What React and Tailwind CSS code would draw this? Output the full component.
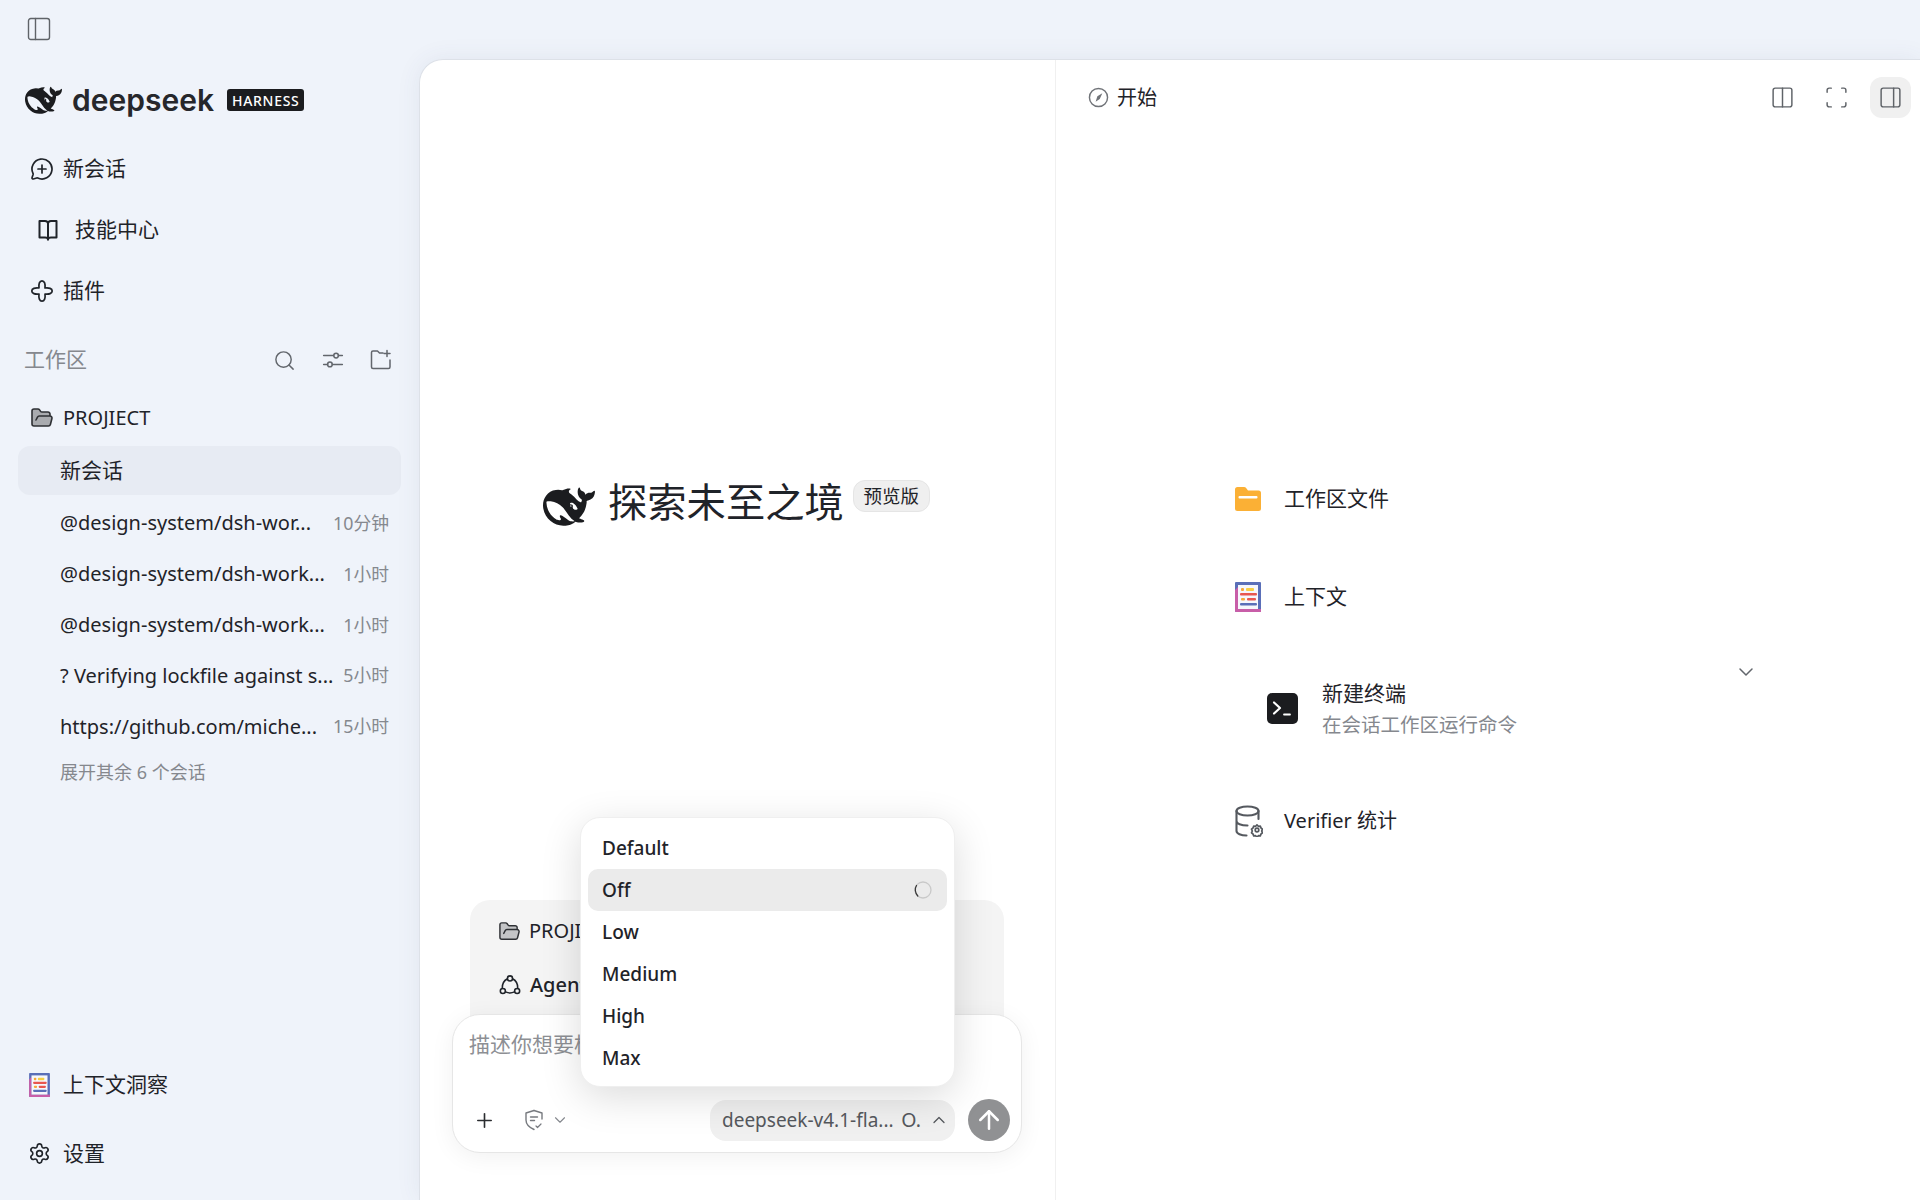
import React from 'react';
import {
  PanelLeft, PanelRight, MessageCirclePlus, Search, FolderOpen, Settings,
  Columns2, Scan, Plus, ChevronDown, ChevronUp, ArrowUp,
} from 'lucide-react';

const FONT = "font-['Noto_Sans','Noto_Sans_CJK_SC',sans-serif]";

const WHALE = "M23.748 4.482c-.254-.124-.364.113-.512.234-.051.039-.094.09-.137.136-.372.397-.806.657-1.373.626-.829-.046-1.537.214-2.163.848-.133-.782-.575-1.248-1.247-1.548-.352-.156-.708-.311-.955-.65-.172-.241-.219-.51-.305-.774-.055-.16-.11-.323-.293-.35-.2-.031-.278.136-.356.276-.313.572-.434 1.202-.422 1.84.027 1.436.633 2.58 1.838 3.393.137.093.172.187.129.323-.082.28-.18.552-.266.833-.055.179-.137.217-.329.14a5.526 5.526 0 01-1.736-1.18c-.857-.828-1.631-1.742-2.597-2.458a11.365 11.365 0 00-.689-.471c-.985-.957.13-1.743.388-1.836.27-.098.093-.432-.779-.428-.872.004-1.67.295-2.687.684a3.055 3.055 0 01-.465.137 9.597 9.597 0 00-2.883-.102c-1.885.21-3.39 1.102-4.497 2.623C.082 8.606-.231 10.684.152 12.85c.403 2.284 1.569 4.175 3.36 5.653 1.858 1.533 3.997 2.284 6.438 2.14 1.482-.085 3.133-.284 4.994-1.86.47.234.962.327 1.78.397.63.059 1.236-.03 1.705-.128.735-.156.684-.837.419-.961-2.155-1.004-1.682-.595-2.113-.926 1.096-1.296 2.746-2.642 3.392-7.003.05-.347.007-.565 0-.845-.004-.17.035-.237.23-.256a4.173 4.173 0 001.545-.475c1.396-.763 1.96-2.015 2.093-3.517.02-.23-.004-.467-.247-.588zM11.581 18c-2.089-1.642-3.102-2.183-3.52-2.16-.392.024-.321.471-.235.763.09.288.207.486.371.739.114.167.192.416-.113.603-.673.416-1.842-.14-1.897-.167-1.361-.802-2.5-1.86-3.301-3.307-.774-1.393-1.224-2.887-1.298-4.482-.02-.386.093-.522.477-.592a4.696 4.696 0 011.529-.039c2.132.312 3.946 1.265 5.468 2.774.868.86 1.525 1.887 2.202 2.891.72 1.066 1.494 2.082 2.48 2.914.348.292.625.514.891.677-.802.09-2.14.11-3.054-.614zm1-6.44a.306.306 0 01.415-.287.302.302 0 01.2.288.306.306 0 01-.31.307.303.303 0 01-.304-.308zm3.11 1.596c-.2.081-.399.151-.59.16a1.245 1.245 0 01-.798-.254c-.274-.23-.47-.358-.552-.758a1.73 1.73 0 01.016-.588c.07-.327-.008-.537-.239-.727-.187-.156-.426-.199-.688-.199a.559.559 0 01-.254-.078c-.11-.054-.2-.19-.114-.358.028-.054.16-.186.192-.21.356-.202.767-.136 1.146.016.352.144.618.408 1.001.782.391.451.462.576.685.914.176.265.336.537.445.848.067.195-.019.354-.25.452z";

const Whale = ({ className }) => (
  <svg viewBox="0 0 24 24" className={className} fill="currentColor" fillRule="evenodd"><path d={WHALE} /></svg>
);

const BookIcon = ({ className }) => (
  <svg viewBox="0 0 20 22" className={className} fill="none" stroke="currentColor" strokeWidth="2" strokeLinejoin="round" strokeLinecap="round">
    <path d="M1.500 2h5.500c1.700 0 3 1 3 2.500V20.500c0-1-1.300-2-3-2H1.500Z" />
    <path d="M18.500 2H13c-1.700 0-3 1-3 2.500V20.500c0-1 1.300-2 3-2h5.500Z" />
  </svg>
);

const PluginIcon = ({ className }) => (
  <svg viewBox="0 0 24 24" className={className} fill="none" stroke="currentColor" strokeWidth="1.700" strokeLinejoin="round">
    <path d="M12 1.800C14.500 1.800 15.500 5 15 9C19 8.500 22.200 9.500 22.200 12C22.200 14.500 19 15.500 15 15C15.500 19 14.500 22.200 12 22.200C9.500 22.200 8.500 19 9 15C5 15.500 1.800 14.500 1.800 12C1.800 9.500 5 8.500 9 9C8.500 5 9.500 1.800 12 1.800Z" />
  </svg>
);

const CompassFilled = ({ className }) => (
  <svg viewBox="0 0 22 22" className={className} fill="none">
    <circle cx="11" cy="11" r="9.500" stroke="#707378" strokeWidth="1.500" />
    <path d="M15 6.500 12.300 12.600 8 15.500 9.800 9.600Z" fill="#707378" />
  </svg>
);

const SlidersIcon = ({ className }) => (
  <svg viewBox="0 0 20 20" className={className} fill="none" stroke="currentColor" strokeWidth="1.400" strokeLinecap="round">
    <path d="M1.500 6h9M15 6h3.500M1.500 14h3.500M9.500 14h9" />
    <circle cx="12.800" cy="6" r="2.100" />
    <circle cx="7.200" cy="14" r="2.100" />
  </svg>
);

const FolderPlusIcon = ({ className }) => (
  <svg viewBox="0 0 22 22" className={className} fill="none" stroke="currentColor" strokeWidth="1.500" strokeLinecap="round" strokeLinejoin="round">
    <path d="M13 4H9.500L7.500 2H3a1.500 1.500 0 0 0-1.500 1.500V18A1.500 1.500 0 0 0 3 19.500h15.500A1.500 1.500 0 0 0 20 18v-7" />
    <path d="M17 1.500v6M14 4.500h6" />
  </svg>
);

const ContextIcon = ({ className }) => (
  <svg viewBox="0 0 26 30" className={className}>
    <rect x="0" y="0" width="26" height="30" rx="1" fill="#5a6fb8" />
    <path d="M0 8 3 5v22h23v3H1a1 1 0 0 1-1-1Z" fill="#c85ea8" />
    <rect x="3" y="3" width="20" height="24" fill="#f6f7fb" />
    <rect x="6" y="6" width="3" height="3" rx="1" fill="#f5a93b" />
    <rect x="11" y="6" width="8" height="3" rx="1" fill="#f7cf45" />
    <rect x="5" y="11" width="17" height="2.600" rx="1" fill="#e8574f" />
    <rect x="6" y="16" width="4" height="2.600" rx="1" fill="#f5a93b" />
    <rect x="12" y="16" width="9" height="2.600" rx="1" fill="#e8574f" />
    <rect x="5" y="21" width="17" height="2.600" rx="1" fill="#5a6fb8" />
  </svg>
);

const OrangeFolder = ({ className }) => (
  <svg viewBox="0 0 26 24" className={className}>
    <path d="M2.500 0h6.500c1 0 1.700.4 2.300 1.200L13 3.500h10.500A2.500 2.500 0 0 1 26 6v15.500a2.500 2.500 0 0 1-2.500 2.500h-21A2.500 2.500 0 0 1 0 21.500v-19A2.500 2.500 0 0 1 2.500 0Z" fill="#fbb035" />
    <rect x="3.500" y="9" width="19" height="2.600" rx="1" fill="#ffffff" />
  </svg>
);

const DatabaseGear = ({ className }) => (
  <svg viewBox="0 0 28 32" className={className} fill="none" stroke="#55595f" strokeWidth="2.100" strokeLinecap="round" strokeLinejoin="round">
    <ellipse cx="12.500" cy="6" rx="11" ry="4.500" />
    <path d="M1.500 6v20c0 2.500 4.500 4.500 10 4.500M23.500 6v8M1.500 16c0 2.500 4.500 4.500 11 4.500" />
    <circle cx="22" cy="25" r="1.800" strokeWidth="1.700" />
    <path strokeWidth="1.700" d="M22 19.800l1.300 1.500 2-.2.7 1.900 1.500 1.200-.8 1.800.8 1.800-1.500 1.200-.7 1.900-2-.2-1.300 1.500-1.300-1.500-2 .2-.7-1.900-1.500-1.200.8-1.800-.8-1.800 1.500-1.200.7-1.900 2 .2Z" />
  </svg>
);

const TerminalTile = () => (
  <div className="w-[31px] h-[31px] rounded-[5px] bg-[#1b1c1f] flex items-center justify-center shrink-0">
    <svg viewBox="0 0 31 31" className="w-[31px] h-[31px]" fill="none" stroke="#ffffff" strokeWidth="2.200" strokeLinecap="round" strokeLinejoin="round">
      <path d="M7 9.500 13 15l-6 5.500" />
      <path d="M17 21.500h6" strokeWidth="1.800" />
    </svg>
  </div>
);

const ShieldIcon = ({ className }) => (
  <svg viewBox="0 0 20 22" className={className} fill="none" stroke="currentColor" strokeWidth="1.400" strokeLinecap="round" strokeLinejoin="round">
    <path d="M10 1.500 2 4v7c0 4.500 3.500 7.500 8 9.500" />
    <path d="M10 1.500 18 4v6" />
    <path d="M6.500 8h7M6.500 11.500h4" />
    <path d="M12 17l1.500 1.500L17 15" strokeWidth="1.200" />
  </svg>
);

const AgentIcon = ({ className }) => (
  <svg viewBox="0 0 20 20" className={className} fill="none" stroke="currentColor" strokeWidth="1.400" strokeLinecap="round">
    <circle cx="10" cy="4" r="2.300" />
    <circle cx="3.500" cy="15.500" r="2.300" />
    <circle cx="16.500" cy="15.500" r="2.300" />
    <path d="M7.300 4.500C4.500 6 3 8.500 3 12.500M12.700 4.500C15.500 6 17 8.500 17 12.500M6 16.300c2.500 1.200 5.500 1.200 8 0" />
  </svg>
);

const BusyIcon = () => (
  <svg viewBox="0 0 20 20" className="w-[20px] h-[20px]" fill="none" strokeWidth="1.300" strokeLinecap="round">
    <circle cx="10" cy="10" r="8" stroke="#c9c9c9" />
    <path d="M3.500 5.500C1.500 8.500 2 13 4.800 16" stroke="#3a3a3a" />
  </svg>
);

const RECENT = [
  { title: '@design-system/dsh-wor...', age: '10分钟' },
  { title: '@design-system/dsh-work...', age: '1小时' },
  { title: '@design-system/dsh-work...', age: '1小时' },
  { title: '? Verifying lockfile against s...', age: '5小时' },
  { title: 'https://github.com/miche...', age: '15小时' },
];

const LEVELS = ['Default', 'Off', 'Low', 'Medium', 'High', 'Max'];

const NavRow = ({ icon, gap, pad, children }) => (
  <div className={`h-[61px] flex items-center text-[21px] text-[#1f2329] ${pad} ${gap}`}>
    {icon}
    <span>{children}</span>
  </div>
);

const Sidebar = () => (
  <aside className="w-[419px] shrink-0 flex flex-col">
    <div className="h-[58px] flex items-center pl-[25px]">
      <PanelLeft className="w-[28px] h-[28px] text-[#5f6368]" strokeWidth={1.200} />
    </div>
    <div className="h-[60px] mt-[12px] flex items-center pl-[25px]">
      <Whale className="w-[37px] h-[37px] text-[#1b1c1f]" />
      <span className="ml-[10px] text-[30px] leading-none font-semibold text-[#26272b] font-['Inter',sans-serif] w-[145px] whitespace-nowrap">deepseek</span>
      <span className="ml-[10px] h-[22px] px-[5px] flex items-center rounded-[3px] bg-[#1b1c1f] text-white text-[14px] font-medium tracking-[0.7px]">HARNESS</span>
    </div>
    <div className="mt-[8px]">
      <NavRow pad="pl-[30px]" gap="gap-[9px]" icon={<MessageCirclePlus className="w-[24px] h-[24px]" strokeWidth={1.700} />}>新会话</NavRow>
      <NavRow pad="pl-[38px]" gap="gap-[17px]" icon={<BookIcon className="w-[20px] h-[22px]" />}>技能中心</NavRow>
      <NavRow pad="pl-[30px]" gap="gap-[9px]" icon={<PluginIcon className="w-[24px] h-[24px]" />}>插件</NavRow>
    </div>
    <div className="h-[40px] mt-[19px] flex items-center pl-[24px] pr-[27px]">
      <span className="text-[21px] text-[#85888e]">工作区</span>
      <div className="ml-auto flex items-center gap-[26px] text-[#62666c]">
        <Search className="w-[23px] h-[23px]" strokeWidth={1.500} />
        <SlidersIcon className="w-[22px] h-[22px]" />
        <FolderPlusIcon className="w-[22px] h-[22px]" />
      </div>
    </div>
    <div className="h-[40px] mt-[18px] flex items-center pl-[30px] gap-[9px] text-[20px] text-[#1f2329]">
      <FolderOpen className="w-[24px] h-[24px] text-[#2e3034] fill-[#a9abaf]" strokeWidth={1.600} />
      <span>PROJIECT</span>
    </div>
    <div className="mx-[18px] mt-[8px] h-[49px] rounded-[12px] bg-[#e7ebf3] flex items-center pl-[42px] text-[21px] text-[#1f2329]">新会话</div>
    <div className="mt-[3px]">
      {RECENT.map((row, i) => (
        <div key={i} className="h-[50.800px] pl-[60px] pr-[30px] flex items-center justify-between">
          <span className="text-[20px] text-[#1f2329] whitespace-nowrap">{row.title}</span>
          <span className="text-[17.800px] text-[#85888e] whitespace-nowrap">{row.age}</span>
        </div>
      ))}
    </div>
    <div className="h-[42px] pl-[60px] flex items-center text-[18px] text-[#85888e]">展开其余 6 个会话</div>
    <div className="mt-auto pb-[12px]">
      <div className="h-[69px] flex items-center pl-[29px] gap-[13px] text-[21px] text-[#1f2329]">
        <ContextIcon className="w-[21px] h-[24px]" />
        <span>上下文洞察</span>
      </div>
      <div className="h-[69px] flex items-center pl-[28px] gap-[12px] text-[21px] text-[#1f2329]">
        <Settings className="w-[23px] h-[23px]" strokeWidth={1.700} />
        <span>设置</span>
      </div>
    </div>
  </aside>
);

const Composer = () => (
  <div className="mt-auto relative pl-[32px] pr-[33px] pb-[47px]">
    <div className="mx-[18px] h-[140px] -mb-[26px] rounded-t-[20px] bg-[#f4f4f4] pl-[28px] pt-[12px] text-[20px] text-[#1f2329]">
      <div className="h-[38px] flex items-center gap-[8px]">
        <FolderOpen className="w-[23px] h-[23px] text-[#2e3034] fill-[#c3c4c6]" strokeWidth={1.500} />
        <span>PROJIECT</span>
      </div>
      <div className="h-[38px] mt-[16px] flex items-center gap-[9px] font-medium">
        <AgentIcon className="w-[22px] h-[22px] ml-[1px]" />
        <span>Agent</span>
      </div>
    </div>
    <div className="relative h-[139px] rounded-[28px] bg-white border border-[#e6e6e6] shadow-[0_4px_24px_rgba(0,0,0,0.06)] flex flex-col">
      <div className="pl-[16px] pt-[14px] text-[21px] text-[#8d8f94]">描述你想要构建的内容</div>
      <div className="mt-auto h-[42px] mb-[11px] flex items-center pl-[20px] pr-[11px]">
        <Plus className="w-[23px] h-[23px] text-[#2b2d30]" strokeWidth={1.700} />
        <ShieldIcon className="w-[20px] h-[22px] ml-[28px] text-[#777a7f]" />
        <ChevronDown className="w-[18px] h-[18px] ml-[7px] text-[#85888e]" strokeWidth={1.500} />
        <div className="ml-auto w-[245px] h-[41px] rounded-[16px] bg-[#f0f0f0] flex items-center pl-[12px] text-[19px] text-[#55585d]">
          <span className="whitespace-nowrap">deepseek-v4.1-fla...</span>
          <span className="ml-auto text-[19.500px]">O.</span>
          <ChevronUp className="w-[20px] h-[20px] ml-[8px] mr-[6px]" strokeWidth={1.500} />
        </div>
        <div className="ml-[13px] w-[42px] h-[42px] rounded-full bg-[#909193] flex items-center justify-center">
          <ArrowUp className="w-[30px] h-[30px] text-white" strokeWidth={2} />
        </div>
      </div>
    </div>
    {/* thinking level menu, open over the composer */}
    <div className="absolute left-[160px] bottom-[113px] w-[375px] h-[270px] rounded-[20px] bg-white border border-[#efefef] shadow-[0_10px_40px_rgba(0,0,0,0.14)] px-[7px] pt-[9px] pb-[7px] flex flex-col">
      {LEVELS.map((level) => (
        <div key={level} className={`flex-1 rounded-[10px] flex items-center pl-[14px] pr-[14px] text-[19px] font-medium text-[#1f2329] ${level === 'Off' ? 'bg-[#ebebeb]' : ''}`}>
          <span>{level}</span>
          {level === 'Off' && <span className="ml-auto"><BusyIcon /></span>}
        </div>
      ))}
    </div>
  </div>
);

const LeftPane = () => (
  <section className="w-[636px] shrink-0 flex flex-col border-r border-[#f0f0f0]">
    <div className="pt-[421px] pl-[123px] flex items-start">
      <Whale className="w-[52px] h-[52px] text-[#1b1c1f]" />
      <span className="ml-[13px] text-[39.300px] leading-[42px] text-[#1f2329] whitespace-nowrap">探索未至之境</span>
      <span className="ml-[9px] -mt-[1px] w-[77px] h-[32px] rounded-[12px] bg-[#efefef] border border-[#e5e5e5] flex items-center justify-center text-[18.500px] text-[#1f2329]">预览版</span>
    </div>
    <Composer />
  </section>
);

const RightPane = () => (
  <section className="flex-1 flex flex-col">
    <div className="pt-[17px] pl-[32px] pr-[9px] h-[58px] flex items-center">
      <CompassFilled className="w-[21px] h-[21px]" />
      <span className="ml-[8px] text-[20px] text-[#1f2329]">开始</span>
      <div className="ml-auto flex items-center text-[#5f6368]">
        <div className="w-[41px] h-[41px] flex items-center justify-center mr-[13px]"><Columns2 className="w-[25px] h-[25px]" strokeWidth={1.400} /></div>
        <div className="w-[41px] h-[41px] flex items-center justify-center mr-[13px]"><Scan className="w-[25px] h-[25px]" strokeWidth={1.400} /></div>
        <div className="w-[41px] h-[41px] rounded-[12px] bg-[#f0f0f0] flex items-center justify-center"><PanelRight className="w-[25px] h-[25px]" strokeWidth={1.400} /></div>
      </div>
    </div>
    <div className="mt-[332px] ml-[179px] w-[523px] text-[21px] text-[#1f2329]">
      <div className="h-[98px] flex items-center">
        <OrangeFolder className="w-[26px] h-[24px]" />
        <span className="ml-[23px]">工作区文件</span>
      </div>
      <div className="h-[98px] flex items-center">
        <ContextIcon className="w-[26px] h-[30px]" />
        <span className="ml-[23px]">上下文</span>
      </div>
      <div className="h-[128px] flex pl-[32px]">
        <div className="self-center -mt-[3px]"><TerminalTile /></div>
        <div className="ml-[24px] self-center -mt-[2px]">
          <div className="leading-[32px]">新建终端</div>
          <div className="leading-[32px] text-[19.500px] text-[#85888e]">在会话工作区运行命令</div>
        </div>
        <ChevronDown className="ml-auto mt-[14px] w-[24px] h-[24px] text-[#62666c]" strokeWidth={1.500} />
      </div>
      <div className="h-[94px] flex items-center">
        <DatabaseGear className="w-[28px] h-[32px]" />
        <span className="ml-[21px] text-[20px]">Verifier 统计</span>
      </div>
    </div>
  </section>
);

export default function App() {
  return (
    <div className={`${FONT} h-screen w-full overflow-hidden bg-[#eff3fa] flex`}>
      <Sidebar />
      <main className="flex-1 mt-[59px] flex bg-white rounded-tl-[24px] border-l border-t border-[#dde1e8] shadow-[0_0_24px_rgba(60,80,120,0.08)]">
        <LeftPane />
        <RightPane />
      </main>
    </div>
  );
}
